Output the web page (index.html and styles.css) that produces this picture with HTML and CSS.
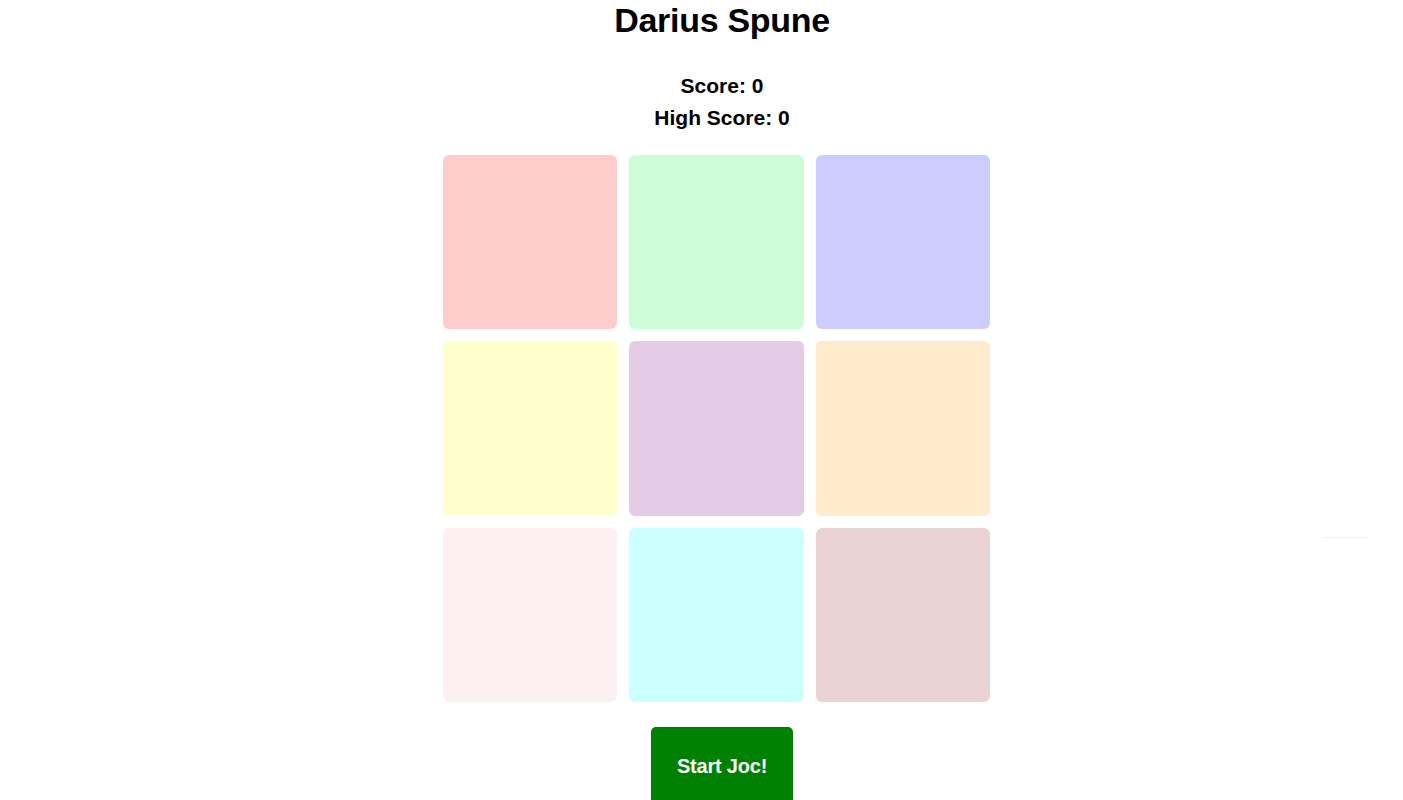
FILE: index.html
```html
<!DOCTYPE html>
<html lang="ro">
<head>
<meta charset="utf-8">
<title>Darius Spune</title>
<link rel="stylesheet" href="styles.css">
</head>
<body>
<main class="page">
  <h1 class="title">Darius Spune</h1>
  <div class="scores">
    <p class="score">Score: 0</p>
    <p class="score">High Score: 0</p>
  </div>
  <div class="board">
    <div class="tile t-red"></div>
    <div class="tile t-green"></div>
    <div class="tile t-blue"></div>
    <div class="tile t-yellow"></div>
    <div class="tile t-purple"></div>
    <div class="tile t-orange"></div>
    <div class="tile t-pink"></div>
    <div class="tile t-cyan"></div>
    <div class="tile t-rose"></div>
  </div>
  <button class="start">Start Joc!</button>
  <div class="faint-line"></div>
</main>
</body>
</html>
```
FILE: styles.css
```css
html, body {
  margin: 0;
  padding: 0;
  background: #ffffff;
  overflow: hidden;
}
.page {
  width: 1444px;
  text-align: center;
  font-family: "Liberation Sans", Arial, sans-serif;
  color: #000;
  position: relative;
  height: 800px;
}
.title {
  margin: 0;
  font-size: 34px;
  line-height: 40px;
  font-weight: bold;
  letter-spacing: -0.3px;
}
.scores {
  margin-top: 30px;
}
.score {
  margin: 0;
  font-size: 21px;
  line-height: 32px;
  font-weight: bold;
}
.board {
  margin: 21px auto 0;
  width: 547px;
  padding-right: 11px;
  display: grid;
  grid-template-columns: repeat(3, 1fr);
  grid-auto-rows: 174.33px;
  column-gap: 12px;
  row-gap: 12px;
}
.tile {
  border-radius: 6px;
}
.t-red { background: #ffcccc; }
.t-green { background: #ccfcd8; }
.t-blue { background: #ccccff; }
.t-yellow { background: #ffffcc; }
.t-purple { background: #e5cce6; }
.t-orange { background: #ffebcc; }
.t-pink { background: #fdf0f2; }
.t-cyan { background: #ccffff; }
.t-rose { background: #ebd3d3; }
.start {
  margin-top: 25px;
  background: #008000;
  color: #ffffff;
  border: none;
  border-radius: 5px;
  font-family: "Liberation Sans", Arial, sans-serif;
  font-weight: bold;
  font-size: 20px;
  letter-spacing: -0.2px;
  padding: 28px 26px;
  cursor: pointer;
}
.faint-line {
  position: absolute;
  left: 1322px;
  top: 537px;
  width: 46px;
  height: 1px;
  background: #f2f2f2;
}
```
